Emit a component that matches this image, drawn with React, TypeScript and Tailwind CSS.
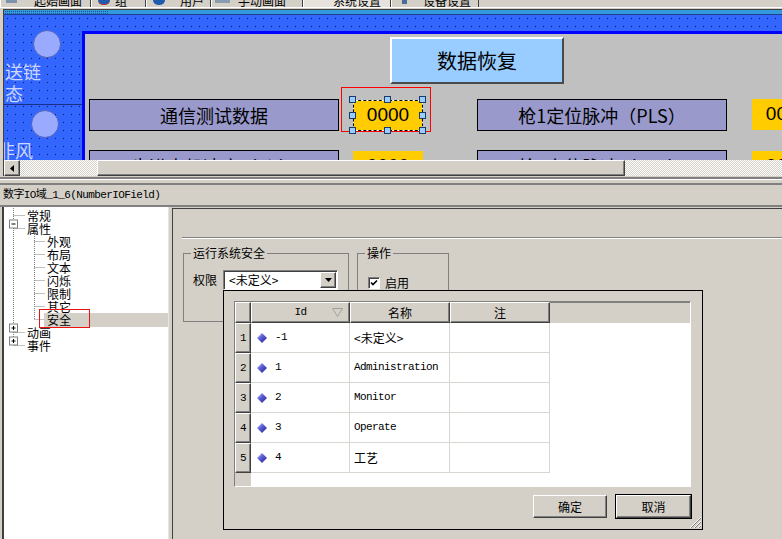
import React from 'react';

const RAISED =
  'border border-t-white border-l-white border-r-[#404040] border-b-[#404040] shadow-[inset_-1px_-1px_0_#808080]';
const SUNKEN =
  'border border-t-[#808080] border-l-[#808080] border-r-white border-b-white shadow-[inset_1px_1px_0_#404040]';
const MONO = "font-['Liberation_Mono','Noto_Sans_CJK_SC',monospace] text-[11px] tracking-[-0.6px]";
const CHECKER = 'bg-[image:repeating-conic-gradient(#ffffff_0_25%,#d4d0c8_0_50%)] bg-[length:2px_2px]';

const Diamond = () => (
  <svg width="10" height="10" viewBox="0 0 10 10">
    <defs>
      <linearGradient id="dg" x1="0" y1="0" x2="1" y2="1">
        <stop offset="0" stopColor="#c0c4ff" />
        <stop offset="0.45" stopColor="#5a5ad8" />
        <stop offset="1" stopColor="#23237a" />
      </linearGradient>
    </defs>
    <polygon points="5,0 10,5 5,10 0,5" fill="url(#dg)" />
  </svg>
);

function TabStrip() {
  return (
    <>
      <div className="h-[7px] flex overflow-hidden">
        <div className="w-[91px] flex items-end pl-[5px] border-l border-l-white border-r border-r-[#404040]">
          <span className="self-start w-[11px] h-[3px] bg-[#7d93ab]" />
          <span className="ml-[17px] leading-[12px]">起始画面</span>
        </div>
        <div className="w-[55px] flex items-end pl-[6px] border-l border-l-white border-r border-r-[#404040]">
          <span className="self-start w-[12px] h-[5px] rounded-b-full bg-[#1f5cb0] border-b border-[#c03020]" />
          <span className="ml-[5px] leading-[12px]">组</span>
        </div>
        <div className="w-[65px] flex items-end pl-[6px] border-l border-l-white border-r border-r-[#404040]">
          <span className="self-start w-[12px] h-[5px] rounded-b-full bg-[#1f5cb0]" />
          <span className="ml-[15px] leading-[12px]">用户</span>
        </div>
        <div className="w-[92px] flex items-end pl-[3px] border-l border-l-white border-r border-r-[#404040]">
          <span className="self-start w-[15px] h-[3px] bg-[#8a9cb0]" />
          <span className="ml-[8px] leading-[12px]">手动画面</span>
        </div>
        <div className="w-[88px] flex items-end pl-[29px] bg-[#e6e3dd] border-l border-l-white border-r border-r-[#404040]">
          <span className="leading-[12px]">系统设置</span>
        </div>
        <div className="w-[88px] flex items-end pl-[10px] border-l border-l-white border-r border-r-[#404040]">
          <span className="self-start w-[5px] h-[4px] bg-[#4a6a9a]" />
          <span className="ml-[16px] leading-[12px]">设备设置</span>
        </div>
      </div>
      <div className="h-[1px] bg-white" />
      <div className="h-[1px]" />
    </>
  );
}

function Handle({ pos }: { pos: string }) {
  return <span className={`absolute w-[7px] h-[7px] bg-[#99ccff] border border-[#1c3a66] ${pos}`} />;
}

function Canvas() {
  return (
    <div className="relative h-[150px] overflow-hidden bg-[#3366ff] bg-[image:conic-gradient(from_270deg_at_1px_1px,#0c1850_90deg,transparent_0)] bg-[length:8px_8px] bg-[position:3px_0px]">
      <div className="relative h-[5px] bg-[#3399dd] border-b border-[#1e3f8a]">
        <div className="absolute left-[1px] top-[1px] w-[103px] h-[3px] bg-[image:conic-gradient(from_270deg_at_1px_1px,#1d5c9c_90deg,transparent_0)] bg-[length:2px_2px]" />
      </div>

      {/* left strip of the screen */}
      <span className="absolute left-[29px] top-[20px] w-[28px] h-[28px] rounded-full bg-[#99aaff] border border-[#5566b8]" />
      <span className="absolute left-[27px] top-[100px] w-[28px] h-[28px] rounded-full bg-[#99aaff] border border-[#5566b8]" />
      <span className="absolute left-[1px] top-[52px] text-[18px] leading-[18px] text-[#cdd6ff]">送链</span>
      <span className="absolute left-[1px] top-[74px] text-[18px] leading-[18px] text-[#cdd6ff]">态</span>
      <span className="absolute left-0 top-[94px] w-[78px] h-[1px] bg-[#1a2f8a]" />
      <span className="absolute left-[-7px] top-[131px] text-[18px] leading-[18px] text-[#cdd6ff]">非风</span>

      {/* screen body */}
      <div className="absolute left-[78px] top-[21px] right-[-20px] bottom-[-20px] bg-[#c0c0c0] border-l-[3px] border-t-[3px] border-[#0000ff]" />

      <div className="absolute left-[386px] top-[27px] w-[174px] h-[47px] bg-[#99ccff] border-2 border-t-white border-l-white border-r-[#4a4a4a] border-b-[#4a4a4a] flex items-center justify-center text-[20px]">
        数据恢复
      </div>

      <div className="absolute left-[85px] top-[89px] w-[250px] h-[32px] bg-[#9999cc] border border-black flex items-center justify-center text-[18px]">
        通信测试数据
      </div>
      <div className="absolute left-[337px] top-[77px] w-[90px] h-[45px] border border-[#ff0000]" />
      <div className="absolute left-[349px] top-[90px] w-[70px] h-[31px] bg-[#ffcc00] border border-white outline-1 outline-dashed outline-black -outline-offset-1 flex items-center justify-center font-['Liberation_Sans',sans-serif] text-[19px]">
        0000
      </div>
      <Handle pos="left-[345px] top-[86px]" />
      <Handle pos="left-[380px] top-[86px]" />
      <Handle pos="left-[415px] top-[86px]" />
      <Handle pos="left-[345px] top-[102px]" />
      <Handle pos="left-[415px] top-[102px]" />
      <Handle pos="left-[345px] top-[117px]" />
      <Handle pos="left-[380px] top-[117px]" />
      <Handle pos="left-[415px] top-[117px]" />

      <div className="absolute left-[473px] top-[89px] w-[250px] h-[32px] bg-[#9999cc] border border-black flex items-center justify-center text-[18px]">
        枪1定位脉冲（PLS）
      </div>
      <div className="absolute left-[748px] top-[89px] w-[70px] h-[31px] bg-[#ffcc00] flex items-center justify-center font-['Liberation_Sans',sans-serif] text-[19px]">
        0000
      </div>

      <div className="absolute left-[85px] top-[140px] w-[250px] h-[32px] bg-[#9999cc] border border-black flex items-center justify-center text-[18px]">
        步进电机速度（r/s）
      </div>
      <div className="absolute left-[349px] top-[141px] w-[70px] h-[31px] bg-[#ffcc00] flex items-center justify-center font-['Liberation_Sans',sans-serif] text-[19px]">
        0000
      </div>
      <div className="absolute left-[473px] top-[140px] w-[250px] h-[32px] bg-[#9999cc] border border-black flex items-center justify-center text-[18px]">
        枪1实位脉冲（PLS）
      </div>
      <div className="absolute left-[748px] top-[141px] w-[70px] h-[31px] bg-[#ffcc00] flex items-center justify-center font-['Liberation_Sans',sans-serif] text-[19px]">
        0000
      </div>
    </div>
  );
}

function HScroll() {
  return (
    <div className="h-[16px] flex">
      <div className={`w-[16px] h-[16px] bg-[#d4d0c8] flex items-center justify-center ${RAISED}`}>
        <svg width="4" height="7" viewBox="0 0 4 7">
          <polygon points="4,0 4,7 0,3.5" fill="#000" />
        </svg>
      </div>
      <div className={`w-[77px] ${CHECKER}`} />
      <div className={`w-[528px] bg-[#d4d0c8] ${RAISED}`} />
      <div className={`flex-1 ${CHECKER}`} />
    </div>
  );
}

const treeRows = [
  { label: '常规', level: 0 },
  { label: '属性', level: 0 },
  { label: '外观', level: 1 },
  { label: '布局', level: 1 },
  { label: '文本', level: 1 },
  { label: '闪烁', level: 1 },
  { label: '限制', level: 1 },
  { label: '其它', level: 1 },
  { label: '安全', level: 1, selected: true },
  { label: '动画', level: 0 },
  { label: '事件', level: 0 },
];

function Tree() {
  const childYs = [34.5, 47.5, 60.5, 73.5, 86.5, 99.5, 112.5];
  const rootYs = [8.5, 21.5, 125.5, 138.5];
  const boxes = [
    { y: 17.5, plus: false },
    { y: 121.5, plus: true },
    { y: 134.5, plus: true },
  ];
  return (
    <div className="relative ml-[2px] w-[167px] bg-white border-l-2 border-l-[#404040] border-r border-r-[#e4e4e4] pt-[2px]">
      <svg className="absolute left-0 top-0" width="60" height="150">
        <g stroke="#808080" strokeDasharray="1 1" fill="none">
          <line x1="9.5" y1="1" x2="9.5" y2="138.5" />
          {rootYs.map((y) => (
            <line key={y} x1="9.5" y1={y} x2="21" y2={y} />
          ))}
          <line x1="30.5" y1="27" x2="30.5" y2="112.5" />
          {childYs.map((y) => (
            <line key={y} x1="30.5" y1={y} x2="41" y2={y} />
          ))}
        </g>
        {boxes.map((b) => (
          <g key={b.y}>
            <rect x="5.5" y={b.y - 4.5} width="8" height="8" fill="#fff" stroke="#808080" />
            <line x1="7.5" y1={b.y - 0.5} x2="11.5" y2={b.y - 0.5} stroke="#000" />
            {b.plus && <line x1="9.5" y1={b.y - 2.5} x2="9.5" y2={b.y + 1.5} stroke="#000" />}
          </g>
        ))}
      </svg>
      {treeRows.map((r) =>
        r.level === 0 ? (
          <div key={r.label} className="relative h-[13px] flex items-center pl-[23px] leading-[13px]">
            {r.label}
          </div>
        ) : (
          <div key={r.label} className="relative h-[13px] flex items-center pl-[40px] leading-[13px]">
            <span className={`flex-1 h-[14px] flex items-center pl-[3px] ${r.selected ? 'bg-[#d4d0c8]' : ''}`}>
              {r.label}
            </span>
          </div>
        )
      )}
      <div className="absolute left-[35px] top-[102px] w-[51px] h-[19px] border border-[#ee1111]" />
    </div>
  );
}

const rows = [
  { n: 1, id: '-1', name: '<未定义>', cjk: true },
  { n: 2, id: '1', name: 'Administration', cjk: false },
  { n: 3, id: '2', name: 'Monitor', cjk: false },
  { n: 4, id: '3', name: 'Operate', cjk: false },
  { n: 5, id: '4', name: '工艺', cjk: true },
];

function Popup() {
  return (
    <div className="absolute left-[50px] top-[81px] w-[480px] h-[240px] bg-[#d4d0c8] border border-black flex flex-col">
      <div className="ml-[10px] mt-[10px] w-[457px] h-[186px] bg-white flex flex-col border border-t-[#808080] border-l-[#808080] border-r-white border-b-white">
        <div className="h-[21px] flex bg-[#d4d0c8]">
          <div className={`w-[16px] ${RAISED}`} />
          <div className={`relative w-[99px] flex items-center justify-center ${RAISED} ${MONO}`}>
            Id
            <svg className="absolute right-[6px] top-[5px]" width="11" height="9" viewBox="0 0 11 9">
              <polygon points="0.5,0.5 10.5,0.5 5.5,8.5" fill="none" stroke="#a0a0a0" />
            </svg>
          </div>
          <div className={`w-[100px] flex items-center justify-center ${RAISED}`}>名称</div>
          <div className={`w-[100px] flex items-center justify-center ${RAISED}`}>注</div>
          <div className="flex-1 border-t border-[#808080]" />
        </div>
        {rows.map((r) => (
          <div key={r.n} className="h-[30px] flex">
            <div className={`w-[16px] bg-[#d4d0c8] flex items-center justify-center ${RAISED} ${MONO}`}>{r.n}</div>
            <div className="w-[99px] flex items-center pl-[6px] border-r border-b border-[#d8d6d0]">
              <Diamond />
              <span className={`ml-[8px] ${MONO}`}>{r.id}</span>
            </div>
            <div className={`w-[100px] flex items-center pl-[4px] border-r border-b border-[#d8d6d0] ${r.cjk ? '' : MONO}`}>
              {r.name}
            </div>
            <div className="w-[100px] border-r border-b border-[#d8d6d0]" />
            <div className="flex-1" />
          </div>
        ))}
        <div className="flex-1 flex">
          <div className="w-[16px] bg-[#d4d0c8]" />
          <div className="flex-1" />
        </div>
      </div>
      <div className="mt-[7px] flex items-center justify-end gap-[8px] pr-[10px]">
        <div className={`w-[74px] h-[23px] bg-[#d4d0c8] flex items-center justify-center ${RAISED}`}>确定</div>
        <div className="w-[77px] h-[25px] border border-black">
          <div className={`w-full h-full bg-[#d4d0c8] flex items-center justify-center ${RAISED}`}>取消</div>
        </div>
      </div>
      <svg className="absolute right-[1px] bottom-[1px]" width="12" height="12" viewBox="0 0 12 12">
        <g strokeWidth="1">
          <line x1="12" y1="1" x2="1" y2="12" stroke="#fff" />
          <line x1="12" y1="2" x2="2" y2="12" stroke="#808080" />
          <line x1="12" y1="5" x2="5" y2="12" stroke="#fff" />
          <line x1="12" y1="6" x2="6" y2="12" stroke="#808080" />
          <line x1="12" y1="9" x2="9" y2="12" stroke="#fff" />
          <line x1="12" y1="10" x2="10" y2="12" stroke="#808080" />
        </g>
      </svg>
    </div>
  );
}

function Properties() {
  return (
    <div className="relative ml-[3px] mt-[1px] flex-1 flex flex-col border-l border-t border-[#404040]">
      <div className="mt-[28px] ml-[9px] h-[2px] border-t border-[#808080] border-b border-b-white" />
      <div className="mt-[6px] flex">
        <fieldset className="ml-[10px] w-[166px] h-[77px] border border-[#808080]">
          <legend className="ml-[7px] px-[2px] leading-[16px]">运行系统安全</legend>
          <div className="flex items-center pl-[9px] pt-[9px]">
            <span>权限</span>
            <div className={`ml-[6px] w-[115px] h-[20px] bg-white flex items-center ${SUNKEN}`}>
              <span className="pl-[5px]">&lt;未定义&gt;</span>
              <div className={`ml-auto mr-[1px] w-[16px] h-[16px] bg-[#d4d0c8] flex items-center justify-center ${RAISED}`}>
                <svg width="7" height="4" viewBox="0 0 7 4">
                  <polygon points="0,0 7,0 3.5,4" fill="#000" />
                </svg>
              </div>
            </div>
          </div>
        </fieldset>
        <fieldset className="ml-[8px] w-[92px] h-[77px] border border-[#808080]">
          <legend className="ml-[7px] px-[2px] leading-[16px]">操作</legend>
          <div className="flex items-center pl-[10px] pt-[13px]">
            <div className={`w-[12px] h-[12px] bg-white flex items-center justify-center ${SUNKEN}`}>
              <svg width="8" height="8" viewBox="0 0 8 8">
                <path d="M1 3.5 L3 5.5 L7 1.5" stroke="#000" strokeWidth="1.6" fill="none" />
              </svg>
            </div>
            <span className="ml-[5px]">启用</span>
          </div>
        </fieldset>
      </div>
      <Popup />
    </div>
  );
}

export default function App() {
  return (
    <div className="w-[782px] h-[539px] overflow-hidden bg-[#d4d0c8] flex flex-col text-black text-[12px] font-['Noto_Sans_CJK_SC',sans-serif]">
      <TabStrip />
      <div className="ml-[3px] border-l border-t border-[#404040]">
        <Canvas />
        <HScroll />
      </div>
      <div className="h-[1px]" />
      <div className="h-[2px] bg-[#808080]" />
      <div className="h-[1px] bg-white" />
      <div className="h-[3px]" />
      <div className="h-[2px] bg-[#808080]" />
      <div className={`h-[20px] flex items-center pl-[3px] ${MONO}`}>数字IO域_1_6(NumberIOField)</div>
      <div className="h-[2px] bg-[#808080]" />
      <div className="flex-1 flex min-h-0">
        <Tree />
        <Properties />
      </div>
    </div>
  );
}
